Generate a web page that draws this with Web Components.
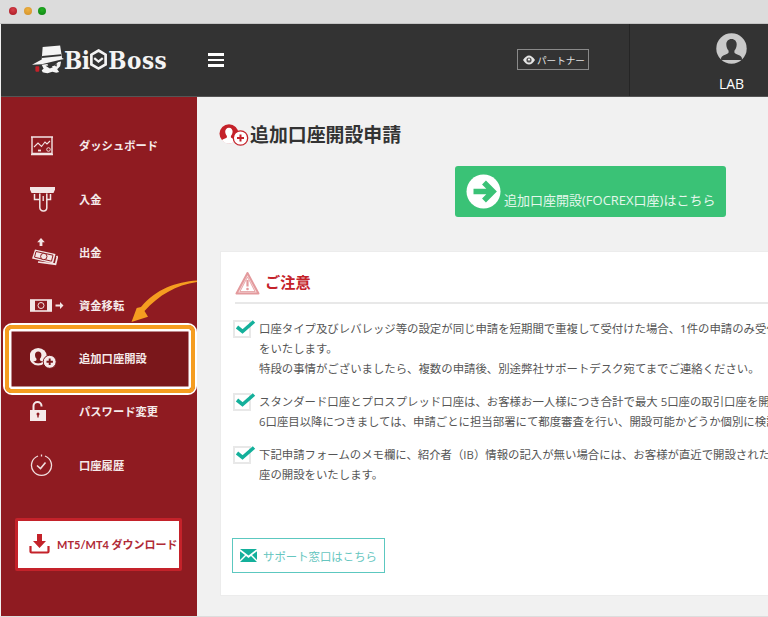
<!DOCTYPE html>
<html lang="ja"><head><meta charset="utf-8"><title>追加口座開設申請</title>
<style>
html,body{margin:0;padding:0;background:#f1f1f1}
body{width:768px;height:617px;overflow:hidden;font-family:"Open Sans","Noto Sans CJK JP",sans-serif}
</style></head><body>
<app-shell>
  <window-bar slot="bar"></window-bar>
  <top-header slot="header"></top-header>
  <side-nav slot="side">
    <nav-item icon="chart" label="ダッシュボード"></nav-item>
    <nav-item icon="atm" label="入金"></nav-item>
    <nav-item icon="cash" label="出金"></nav-item>
    <nav-item icon="transfer" label="資金移転"></nav-item>
    <nav-item icon="adduser" label="追加口座開設" active></nav-item>
    <nav-item icon="lock" label="パスワード変更"></nav-item>
    <nav-item icon="clock" label="口座履歴"></nav-item>
    <download-button></download-button>
  </side-nav>
  <main-panel slot="main">
    <page-title>追加口座開設申請</page-title>
    <go-button>追加口座開設(FOCREX口座)はこちら</go-button>
    <notice-card>
      <check-item>口座タイプ及びレバレッジ等の設定が同じ申請を短期間で重複して受付けた場合、1件の申請のみ受付<br>をいたします。<br>特段の事情がございましたら、複数の申請後、別途弊社サポートデスク宛てまでご連絡ください。</check-item>
      <check-item>スタンダード口座とプロスプレッド口座は、お客様お一人様につき合計で最大 5口座の取引口座を開設<br>6口座目以降につきましては、申請ごとに担当部署にて都度審査を行い、開設可能かどうか個別に検討</check-item>
      <check-item>下記申請フォームのメモ欄に、紹介者（IB）情報の記入が無い場合には、お客様が直近で開設された口<br>座の開設をいたします。</check-item>
      <support-button slot="foot"></support-button>
    </notice-card>
  </main-panel>
</app-shell>
<script>
function def(name, html){
  customElements.define(name, class extends HTMLElement{
    connectedCallback(){
      if(this.shadowRoot) return;
      const r=this.attachShadow({mode:'open'});
      r.innerHTML = typeof html==='function' ? html(this) : html;
    }
  });
}
def('app-shell',`<style>
:host{display:flex;flex-direction:column;width:768px;height:616px;border-bottom:1px solid #ddd;overflow:hidden;background:#f1f1f1}
.row{display:flex;flex:1;min-height:0;padding-left:1px}
</style><slot name="bar"></slot><slot name="header"></slot><div class="row"><slot name="side"></slot><slot name="main"></slot></div>`);
def('window-bar',`<style>
:host{display:flex;align-items:center;gap:6.5px;height:24px;box-sizing:border-box;padding:0 0 1px 9px;background:#dcdcdc;border-bottom:1px solid #c4c4c4}
i{width:8px;height:8px;border-radius:50%;display:block}
</style><i style="background:radial-gradient(circle at 50% 35%,#d8404a,#a31620)"></i><i style="background:radial-gradient(circle at 50% 35%,#eeb040,#cf8f2a)"></i><i style="background:radial-gradient(circle at 50% 35%,#22b022,#0e7f12)"></i>`);
def('top-header',`<style>
:host{display:flex;align-items:stretch;height:72px;margin-left:1px;background:#333;color:#fff;border-bottom:1px solid #555}
.logo{display:flex;align-items:center;margin-left:31px;width:132px;flex:none;font:bold 24px "DejaVu Serif Condensed","DejaVu Serif",serif;color:#f4f4f4}
.logo svg{flex:none;display:block}
.bi{letter-spacing:-.6px}
.boss{letter-spacing:.5px}
.ham{display:flex;flex-direction:column;gap:3.2px;margin:29px 0 0 44px;width:16px;flex:none}
.ham b{display:block;height:2.5px;background:#fff}
.partner{display:flex;align-items:center;gap:2px;margin:25px 0 0 293px;width:72px;height:21px;box-sizing:border-box;border:1.5px solid #8a8a8a;padding-left:5px;font-size:9.6px;color:#e2e2e2;flex:none}
.user{margin-left:40px;width:139px;flex:none;border-left:1px solid #252525;display:flex;flex-direction:column;align-items:center;box-sizing:border-box;padding:9px 0 0 65px}
.user span{font-size:14px;line-height:18px;margin-top:11px}
</style>
<div class="logo">
<svg width="32" height="30" viewBox="0 0 33 30"><path fill="#f4f4f4" d="M11 1.500 29 0l2 13 2 1-7 1.500L10 19.500 0 20l10-5.500z"/><path fill="#333" d="M10.500 11 30 9l.4 1.800L10 13z"/><path fill="#f4f4f4" d="M10 20l6-1 1 3 6-1 4-4 3-.5-1 5-3 3 2 3-3 .6-4-1-5 1.500-3-.5-2-.5-1-2 2-1.500z"/><path fill="#333" d="M14 21l6-.6 1.400 2-3 1.400zM23 20l3-.6-1 2.600z"/><rect x="3.500" y="21.500" width="4" height="5.500" rx=".8" fill="#c4222a"/></svg>
<span class="bi">Bi</span><svg width="19" height="24" viewBox="0 0 20 24"><path fill="none" stroke="#f4f4f4" stroke-width="2.800" d="M10 2l7.500 4.400v10.200L10 21l-7.500-4.400V6.400z"/><path fill="none" stroke="#f4f4f4" stroke-width="2.400" d="M5.500 10l4.500 3.600L14.500 10"/></svg><span class="boss">Boss</span></div>
<div class="ham"><b></b><b></b><b></b></div>
<div class="partner"><svg width="12" height="10" viewBox="0 0 12 10"><path fill="#e6e6e6" d="M0 5c2-3 4-4.500 6-4.500S10 2 12 5c-2 3-4 4.500-6 4.500S2 8 0 5z"/><circle cx="6" cy="5" r="2.600" fill="#555"/><circle cx="6" cy="4.600" r="1.100" fill="#eee"/></svg><span>パートナー</span></div>
<div class="user"><svg width="31" height="31" viewBox="0 0 31 31"><defs><clipPath id="c"><circle cx="15.500" cy="15.500" r="15.200"/></clipPath></defs><circle cx="15.500" cy="15.500" r="15.200" fill="#c9c9c9"/><g clip-path="url(#c)" fill="#3a3a3a"><path d="M15.500 6c3.300 0 5.200 2.400 5.200 5.500 0 2.500-1 5-2.300 6.200v1.700c0 1 3 2 5.300 3 1.500.7 2.300 2 2.300 3.600v1H5v-1c0-1.600.8-2.900 2.300-3.600 2.300-1 5.300-2 5.300-3v-1.700c-1.300-1.200-2.300-3.700-2.300-6.200C10.300 8.400 12.200 6 15.500 6z"/></g></svg><span>LAB</span></div>`);
def('side-nav',`<style>
:host{display:flex;flex-direction:column;width:196px;flex:none;background:#8f1b21;padding-top:22.500px;box-sizing:border-box;position:relative}
::slotted(download-button){margin:26px 0 0 14px}
</style><slot></slot>`);
const navIcons={
chart:`<svg width="24" height="20" viewBox="0 0 24 20" fill="none" stroke="#f3e5e5"><path stroke-width="1.400" d="M1 1h22M2 1.500v16h20v-16M1 18.500h22"/><path stroke-width="1.100" d="M4 11l4-4 3.500 3.500L15 6l2 2 3-3"/><circle cx="18.500" cy="13.500" r="1.800" stroke-width=".9"/><path stroke-width="1.800" d="M8 14.500h3"/></svg>`,
atm:`<svg width="25" height="25" viewBox="0 0 25 25" fill="none" stroke="#f3e5e5"><path fill="#f3e5e5" stroke="none" d="M0 0h25v2.500l-1.500 3.500h-22L0 2.500z"/><path stroke-width="1.500" d="M4.500 7v5.500h5M20.500 7v5.500H17"/><path stroke-width="1.500" d="M9.800 6.500V20.500a3.500 3.500 0 0 0 3.500 3.500h.5a3 3 0 0 0 3-3V6.500"/><path stroke-width="1.300" d="M13.200 9v5"/></svg>`,
cash:`<svg width="28" height="30" viewBox="0 0 28 30"><path fill="#f3e5e5" d="M11 1l3.800 4.200h-2.400V9H9.600V5.200H7.200z"/><path fill="#f3e5e5" d="M5 12.500l20.500 4.500-2.500 9.500-21-5z"/><path fill="none" stroke="#8f1b21" stroke-width="1" d="M6 14.500l17 3.700-1.500 6-17-4z"/><circle cx="13.800" cy="19.500" r="3.200" fill="#f3e5e5" stroke="#8f1b21"/><path fill="none" stroke="#f3e5e5" stroke-width="1.700" d="M26.500 19l.8 1-1.800 7.200L8 25"/></svg>`,
transfer:`<svg width="34" height="13" viewBox="0 0 34 13"><rect x=".8" y="1" width="20.400" height="11" fill="none" stroke="#f3e5e5" stroke-width="1.600"/><rect x="1" y="1" width="4" height="11" fill="#f3e5e5"/><rect x="17" y="1" width="4" height="11" fill="#f3e5e5"/><circle cx="11" cy="6.500" r="3" fill="none" stroke="#f3e5e5"/><path fill="#f3e5e5" d="M25.500 5.500H30V3l3.500 3.500L30 10V7.500h-4.500z"/></svg>`,
adduser:`<svg width="27" height="21" viewBox="0 0 27 21"><defs><clipPath id="u"><circle cx="8.200" cy="8.800" r="6.800"/></clipPath></defs><circle cx="8.200" cy="8.800" r="8.800" fill="#f5eaea"/><path clip-path="url(#u)" fill="#7a171b" d="M8.200 3.500c2 0 3.200 1.500 3.200 3.500 0 1.500-.6 3-1.500 3.700v1.200c0 .6 1.800 1.200 3.200 1.800.8.300 1.200 1 1.200 2H2.100c0-1 .4-1.700 1.200-2 1.400-.6 3.200-1.200 3.200-1.800v-1.200C5.600 10 5 8.500 5 7c0-2 1.200-3.500 3.200-3.500z"/><circle cx="19.700" cy="13.800" r="6.500" fill="#f5eaea" stroke="#7a171b" stroke-width="1"/><path stroke="#7a171b" stroke-width="1.900" d="M16.500 13.800h6.400M19.700 10.600v6.400"/></svg>`,
lock:`<svg width="16" height="20" viewBox="0 0 16 20" style="margin-top:-2px"><path fill="none" stroke="#f5eaea" stroke-width="2" d="M3.500 9V5a4 4 0 0 1 8 0v.5"/><rect x="0" y="9" width="16" height="11" fill="#f5eaea"/><circle cx="8" cy="13" r="1.500" fill="#8f1b21"/><rect x="7.300" y="13" width="1.400" height="3.500" fill="#8f1b21"/></svg>`,
clock:`<svg width="23" height="23" viewBox="0 0 23 23" fill="none" stroke="#f1dede" stroke-width="1.300"><path d="M8 2a10 10 0 1 0 7 0"/><path d="M11.500 0.500v2"/><path stroke-width="1.600" d="M7 11.500l3.500 3 5-6"/></svg>`};
def('nav-item',h=>{const n=h.getAttribute('icon'),a=h.hasAttribute('active');return `<style>
:host{display:flex;align-items:center;height:53.200px;position:relative;font-size:11.300px;font-weight:700;color:#f5eaea;line-height:1}
.ic{width:49px;margin-left:29px;flex:none;display:flex;align-items:center;z-index:1}
.ic svg{display:block}
span{z-index:1}
.hl{position:absolute;left:2px;top:-9.300px;width:194px;height:72px;box-sizing:border-box;border-radius:9px;background:#7a171b;border:2.500px solid #fff}
.hl::before{content:"";position:absolute;inset:0;border:4.500px solid #f59d20;border-radius:6px;box-shadow:inset 0 0 0 2.500px #fff}
.ar{position:absolute;left:125px;top:-53.500px;z-index:2}
</style>${a?'<div class="hl"></div><svg class="ar" width="72" height="44" viewBox="0 0 72 44"><path fill="#f59d20" d="M71 1.500C50 3 30 10 15 28l-4.300 1L5.500 43 22 37.700 18.500 32C33 16 50 6 71 3z"/></svg>':''}<div class="ic">${navIcons[n]}</div><span>${h.getAttribute('label')}</span>`});
def('download-button',`<style>
:host{display:flex;align-items:center;width:167px;height:53px;box-sizing:border-box;border:3px solid #c4222a;border-radius:2px;background:#fff;padding-left:11px;gap:7px;color:#b02a36;font:700 11px Lato,"Noto Sans CJK JP",sans-serif;white-space:nowrap}
</style><svg width="21" height="20" viewBox="0 0 21 20"><path fill="#c4222a" d="M8 0h5v7h4l-6.500 7L4 7h4z"/><path fill="none" stroke="#c4222a" stroke-width="2.200" d="M1.500 12v5.500a1 1 0 0 0 1 1h16a1 1 0 0 0 1-1V12"/></svg><span>MT5/MT4 ダウンロード</span>`);
def('main-panel',`<style>
:host{display:flex;flex-direction:column;flex:1;min-width:0;padding:27px 0 0 23px;box-sizing:border-box;overflow:hidden}
::slotted(go-button){margin:18px 0 34px 235px}
</style><slot></slot>`);
def('page-title',`<style>
:host{display:flex;align-items:center;height:24px;font:700 18.900px/24px "Noto Sans CJK JP",sans-serif;color:#333;white-space:nowrap;margin-left:-1px}
svg{flex:none;margin-right:1px}
slot{display:block;margin-top:-4px}
</style><svg width="30" height="24" viewBox="0 0 30 24"><circle cx="10" cy="9.700" r="9.500" fill="#c4222a"/><path fill="#fff" d="M10 3.700c2.400 0 3.600 1.800 3.600 3.900 0 1.800-.8 3.500-1.700 4.300v1.300c0 .7 2.200 1.400 3.700 2.100a2.500 2.500 0 0 1 1.200 1.100 9.500 9.500 0 0 1-13.900 0c.2-.5.600-.8 1.300-1.100 1.500-.7 3.700-1.400 3.700-2.100v-1.300c-.9-.8-1.700-2.500-1.700-4.300C6.200 5.500 7.600 3.700 10 3.700z"/><circle cx="21.500" cy="14" r="7.200" fill="#fff" stroke="#c4222a" stroke-width="1.300"/><path stroke="#c4222a" stroke-width="2" d="M18 14h7M21.500 10.500v7"/></svg><slot></slot>`);
def('go-button',`<style>
:host{display:flex;align-items:flex-end;width:271px;height:51px;box-sizing:border-box;border-radius:3px;background:#3ac276;color:#e4f7ec;padding:0 0 7px 11px;font-size:13px;line-height:20px;white-space:nowrap;flex:none}
svg{flex:none;align-self:flex-start;margin:8px 3px 0 0}
</style><svg width="35" height="35" viewBox="0 0 35 35"><circle cx="17.500" cy="17.500" r="17" fill="#fff"/><path fill="none" stroke="#3ac276" stroke-width="5.500" d="M7.500 17.500H25M18 8.500l9 9-9 9"/></svg><slot></slot>`);
def('notice-card',`<style>
:host{display:block;width:640px;height:345px;box-sizing:border-box;background:#fff;border:1px solid #ececec;padding:16px 0 0 14px;flex:none}
.h{display:flex;align-items:center;gap:3px;height:26px;font:700 15.200px/26px "Noto Sans CJK JP",sans-serif;color:#c4222a}
.h svg{margin-top:4px;flex:none}
hr{margin:8px 0 15px 0;height:2px;border:0;background:#e8e8e8}
.list{display:flex;flex-direction:column;gap:13px;margin-left:-2.500px}
.foot{margin:53px 0 0 -3px}
</style><div class="h"><svg width="27" height="25" viewBox="0 0 27 25" stroke-linejoin="round"><path d="M12.500 2 1.500 22.500h22z" fill="#f7dcdd" stroke="#e39a9d" stroke-width="2"/><path d="M12.500 6 5 20.500h15z" fill="#fff" stroke="#e39a9d" stroke-width=".8"/><path stroke="#e39a9d" stroke-width="2.200" d="M12.500 9v6.500"/><circle cx="12.500" cy="18" r="1.300" fill="#e39a9d"/></svg><span>ご注意</span></div><hr><div class="list"><slot></slot></div><div class="foot"><slot name="foot"></slot></div>`);
def('check-item',`<style>
:host{display:flex;align-items:flex-start;font-size:11.400px;line-height:20px;color:#555;white-space:nowrap}
.b{position:relative;width:18px;height:18px;box-sizing:border-box;border:2.500px solid #e8e8e8;background:#fff;flex:none;margin:1px 8.500px 0 0}
svg{position:absolute;left:0;top:-2.500px}
</style><div class="b"><svg width="21" height="15" viewBox="0 0 21 15"><path fill="none" stroke="#14b09b" stroke-width="3.600" d="M2 7l5.500 4.500L19 1.500"/></svg></div><div><slot></slot></div>`);
def('support-button',`<style>
:host{display:inline-flex;align-items:center;width:153px;height:35px;box-sizing:border-box;border:1.500px solid #5cc8c0;background:#fff;padding-left:7px;gap:6px;color:#66c6c0;font-size:11.400px;white-space:nowrap}
</style><svg width="17" height="13" viewBox="0 0 17 13"><path fill="#14b09b" d="M0 0h17L8.500 6.500zM0 2.200l5 3.800L0 11zM17 2.200 12 6l5 5zM0 13l6-6 2.500 2L11 7l6 6z"/></svg><span>サポート窓口はこちら</span>`);
</script>
</body></html>
